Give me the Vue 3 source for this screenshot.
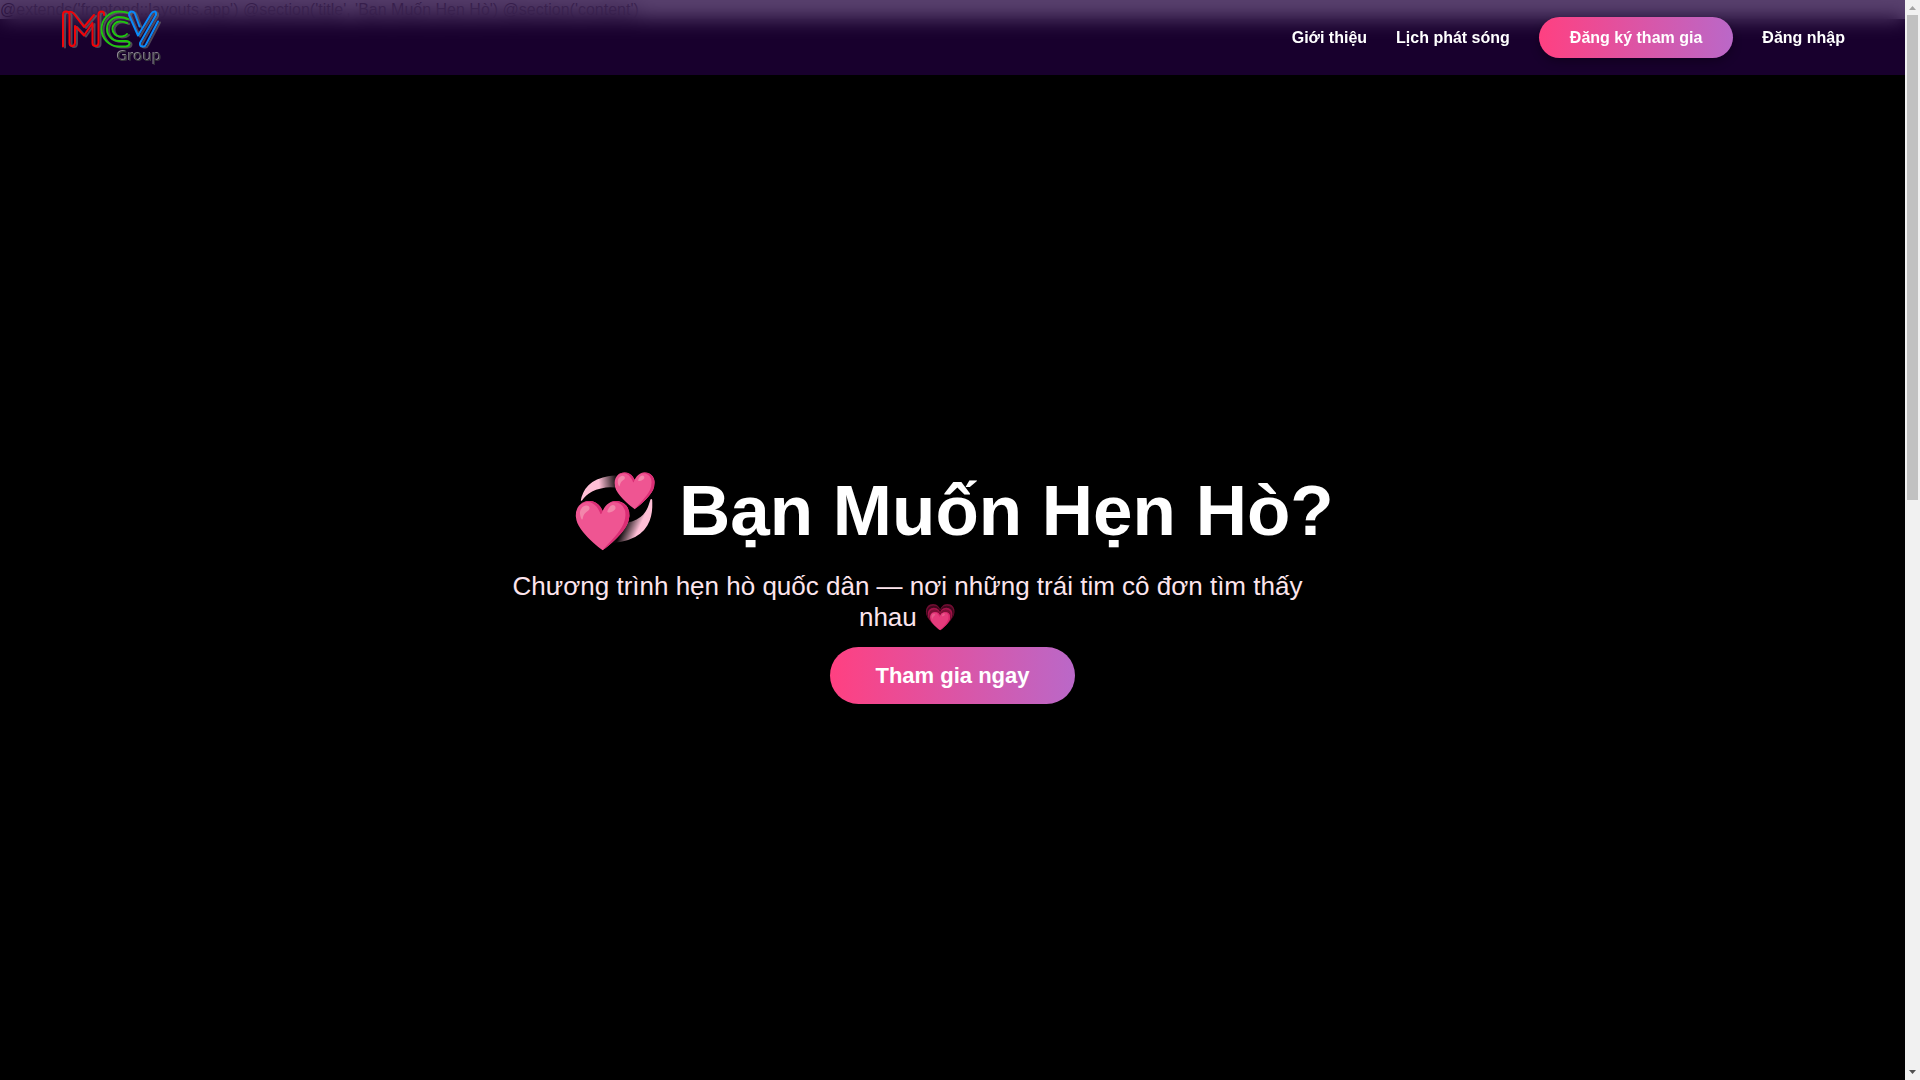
<script setup>
import { ref } from 'vue'

const links = ref([
  { text: 'Giới thiệu', href: '#about' },
  { text: 'Lịch phát sóng', href: '#schedule' },
  { text: 'Đăng ký tham gia', href: '#register', primary: true },
  { text: 'Đăng nhập', href: '#login' },
])

const letters = [
  {
    color: '#f00409',
    d: 'M3 37.5V5.5Q3 2.500 6 2.500T9.500 5.500V34Q9.500 37 12 37T15 34V17L24 26.500L32.500 14V34Q32.500 37 35.500 37T38.500 34V5.500Q38.500 2.500 41.500 2.500T44 6M9 3Q12 2 14 5L24 18L34 6',
  },
  {
    color: '#1fc60f',
    d: 'M69 4Q64 2.500 59 2.500A17.500 17.500 0 0 0 59 37.500H66Q69.500 37 69.500 34.500T66 32H59A12 12 0 0 1 59 8Q64 8 68 10M67 14Q64 12.500 60 12.500A7.500 7.500 0 0 0 60 27.500Q65 27.500 67 25',
  },
  {
    color: '#0a8afa',
    d: 'M79.500 17.500L75 5Q74 2.500 71.500 2.500T69 6L78 26.500L91 5Q92.500 2.500 94.500 2.500T96 6L80 34Q79.500 37.500 82.500 37.500Q85 38 86 35.500L98 12.500',
  },
]
</script>

<template>
  <div class="page">
    <div class="screen">
      <div class="directives">@extends('frontend::layouts.app') @section('title', 'Bạn Muốn Hẹn Hò') @section('content')</div>

      <header class="navbar">
        <a class="logo" href="#" aria-label="MCV Group">
          <svg width="102" height="56" viewBox="0 1 102 56" fill="none" stroke-linecap="round" stroke-linejoin="round">
            <g v-for="letter in letters" :key="letter.color">
              <path :d="letter.d" stroke="#66626a" stroke-width="2" transform="translate(2 1)" opacity="0.7" />
              <path :d="letter.d" :stroke="letter.color" stroke-width="2" />
            </g>
            <text class="logo-text" x="57" y="52">Group</text>
          </svg>
        </a>
        <nav class="menu">
          <a v-for="link in links" :key="link.text" :href="link.href" :class="{ primary: link.primary }">{{ link.text }}</a>
        </nav>
      </header>

      <section class="hero">
        <div class="hero-content">
          <h1>💞 Bạn Muốn Hẹn Hò?</h1>
          <p>Chương trình hẹn hò quốc dân — nơi những trái tim cô đơn tìm thấy nhau 💗</p>
          <a class="join" href="#register">Tham gia ngay</a>
        </div>
      </section>
    </div>
    <div class="scrollbar" aria-hidden="true">
      <svg class="arrow" width="15" height="15"><path d="M4 10L7.500 6L11 10Z" fill="#a3a3a3" /></svg>
      <div class="track"><div class="thumb"></div></div>
      <svg class="arrow" width="15" height="15"><path d="M4 5L7.500 9L11 5Z" fill="#505050" /></svg>
    </div>
  </div>
</template>

<style>
body {
  margin: 0;
  background: #fff;
  overflow: hidden;
}
</style>

<style scoped>
.page {
  display: flex;
  height: 100vh;
  font-family: Arial, "Liberation Sans", sans-serif;
}
.screen {
  position: relative;
  flex: 1;
  overflow: hidden;
}
.directives {
  font-size: 16px;
  line-height: 19px;
  color: #000;
}
.navbar {
  position: absolute;
  top: 0;
  left: 0;
  right: 0;
  z-index: 10;
  display: flex;
  align-items: center;
  justify-content: space-between;
  height: 75px;
  box-sizing: border-box;
  padding: 0 60px;
  background: rgba(32, 0, 60, 0.75);
  backdrop-filter: blur(10px);
}
.logo {
  display: flex;
}
.logo-text {
  fill: #3a383e;
  font-family: "Noto Sans", sans-serif;
  font-size: 15px;
  filter: drop-shadow(-1px -1px 0 #8f8b93);
}
.menu {
  display: flex;
  align-items: center;
  gap: 29px;
}
.menu a {
  color: #fff;
  font-size: 16px;
  font-weight: 600;
  line-height: 19px;
  text-decoration: none;
}
.menu a.primary {
  padding: 11px 31px;
  border-radius: 30px;
  background: linear-gradient(90deg, #ff4081, #ba68c8);
  box-shadow: 0 4px 10px rgba(0, 0, 0, 0.3);
}
.hero {
  display: flex;
  align-items: center;
  justify-content: center;
  height: 100vh;
  padding-top: 57px;
  box-sizing: border-box;
  background: #000;
  text-align: center;
}
.hero-content {
  width: 890px;
}
h1 {
  margin: 0 0 21px;
  color: #fff;
  font-size: 71px;
  font-weight: 700;
  line-height: 79px;
}
p {
  max-width: 800px;
  margin: 0 0 14px;
  color: #fce4ec;
  font-size: 26px;
  line-height: 31px;
}
.join {
  display: inline-block;
  padding: 16px 45px;
  border-radius: 40px;
  background: linear-gradient(90deg, #ff4081, #ba68c8);
  color: #fff;
  font-size: 22px;
  font-weight: 700;
  line-height: 25px;
  text-decoration: none;
}
.scrollbar {
  display: flex;
  flex-direction: column;
  width: 15px;
  background: #f1f1f1;
}
.arrow {
  display: block;
}
.track {
  flex: 1;
  padding: 0 2px;
}
.thumb {
  height: 46.2%;
  background: #c1c1c1;
}
</style>
